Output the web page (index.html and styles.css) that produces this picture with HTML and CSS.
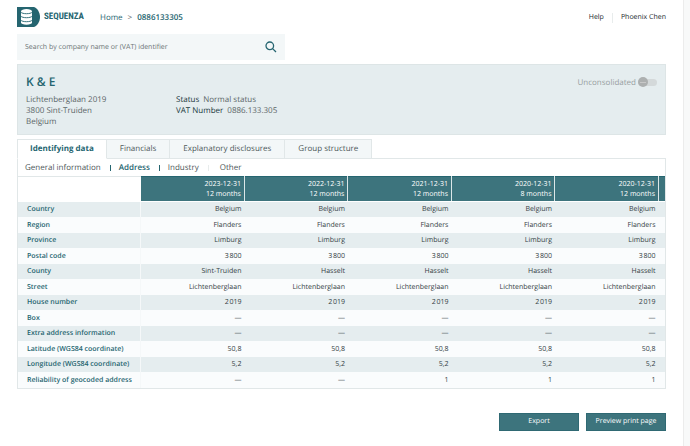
FILE: index.html
```html
<!DOCTYPE html>
<html lang="en">
<head>
<meta charset="utf-8">
<title>Sequenza</title>
<link rel="stylesheet" href="styles.css">
</head>
<body>
<div class="page">
  <header class="topbar">
    <a class="brand" href="#">
      <svg class="brand-mark" viewBox="0 0 23 20" aria-hidden="true">
        <path fill="#256570" d="M0 0h17c3 1 6 5 6 10s-3 9-6 10H0z"/>
        <path fill="#fff" d="M4 4.200v11.300c0 1.300 2.400 2.200 5.500 2.200s5.500-.9 5.500-2.200V4.200z"/>
        <ellipse cx="9.500" cy="4.300" rx="5.500" ry="2.200" fill="#fff"/>
        <path fill="none" stroke="#256570" stroke-width=".9" d="M4 5.200c1 2 10 2 11 0M4 9.200c1 2 10 2 11 0M4 13.200c1 2 10 2 11 0"/>
      </svg>
      <span class="brand-name">SEQUENZA</span>
    </a>
    <nav class="crumbs" aria-label="Breadcrumb">
      <a href="#">Home</a><span class="arrow">&gt;</span><a class="current" href="#">0886133305</a>
    </nav>
    <nav class="account" aria-label="Account">
      <a href="#">Help</a><a class="user" href="#">Phoenix Chen</a>
    </nav>
  </header>

  <form class="search">
    <input type="text" aria-label="Search" placeholder="Search by company name or (VAT) identifier">
    <button type="button" aria-label="Search">
      <svg viewBox="0 0 12 12" aria-hidden="true"><circle cx="4.800" cy="4.800" r="3.800"/><path d="M7.600 7.600l3.400 3.400"/></svg>
    </button>
  </form>

  <section class="company">
    <div class="address">
      <h1>K &amp; E</h1>
      <p>Lichtenberglaan 2019<br>3800 Sint-Truiden<br>Belgium</p>
    </div>
    <dl class="facts">
      <div><dt>Status</dt><dd>Normal status</dd></div>
      <div><dt>VAT Number</dt><dd>0886.133.305</dd></div>
    </dl>
    <label class="switch">Unconsolidated<input type="checkbox" disabled></label>
  </section>

  <nav class="tabs" aria-label="Sections">
    <a class="active" href="#">Identifying data</a><a href="#">Financials</a><a href="#">Explanatory disclosures</a><a href="#">Group structure</a>
  </nav>
  <main class="panel">
    <nav class="subnav" aria-label="Subsections">
      <a href="#">General information</a><a class="active" href="#">Address</a><a href="#">Industry</a><a class="last" href="#">Other</a>
    </nav>
    <table>
      <colgroup><col class="label-col"><col span="5" class="year-col"><col></colgroup>
      <thead>
        <tr><td></td><th>2023-12-31<br>12 months</th><th>2022-12-31<br>12 months</th><th>2021-12-31<br>12 months</th><th>2020-12-31<br>8 months</th><th>2020-12-31<br>12 months</th><th></th></tr>
      </thead>
      <tbody>
        <tr><th>Country</th><td>Belgium</td><td>Belgium</td><td>Belgium</td><td>Belgium</td><td>Belgium</td><td></td></tr>
        <tr><th>Region</th><td>Flanders</td><td>Flanders</td><td>Flanders</td><td>Flanders</td><td>Flanders</td><td></td></tr>
        <tr><th>Province</th><td>Limburg</td><td>Limburg</td><td>Limburg</td><td>Limburg</td><td>Limburg</td><td></td></tr>
        <tr><th>Postal code</th><td>3&#8202;800</td><td>3&#8202;800</td><td>3&#8202;800</td><td>3&#8202;800</td><td>3&#8202;800</td><td></td></tr>
        <tr><th>County</th><td>Sint-Truiden</td><td>Hasselt</td><td>Hasselt</td><td>Hasselt</td><td>Hasselt</td><td></td></tr>
        <tr><th>Street</th><td>Lichtenberglaan</td><td>Lichtenberglaan</td><td>Lichtenberglaan</td><td>Lichtenberglaan</td><td>Lichtenberglaan</td><td></td></tr>
        <tr><th>House number</th><td>2&#8202;019</td><td>2&#8202;019</td><td>2&#8202;019</td><td>2&#8202;019</td><td>2&#8202;019</td><td></td></tr>
        <tr><th>Box</th><td>—</td><td>—</td><td>—</td><td>—</td><td>—</td><td></td></tr>
        <tr><th>Extra address information</th><td>—</td><td>—</td><td>—</td><td>—</td><td>—</td><td></td></tr>
        <tr><th>Latitude (WGS84 coordinate)</th><td>50,8</td><td>50,8</td><td>50,8</td><td>50,8</td><td>50,8</td><td></td></tr>
        <tr><th>Longitude (WGS84 coordinate)</th><td>5,2</td><td>5,2</td><td>5,2</td><td>5,2</td><td>5,2</td><td></td></tr>
        <tr><th>Reliability of geocoded address</th><td>—</td><td>—</td><td>1</td><td>1</td><td>1</td><td></td></tr>
      </tbody>
    </table>
  </main>

  <div class="actions">
    <button type="button">Export</button>
    <button type="button">Preview print page</button>
  </div>
</div>
</body>
</html>
```

FILE: styles.css
```css
* { box-sizing: border-box; }

body {
  margin: 0;
  background: #f8f9f9;
  color: #4d5759;
  font: 7px/10px "Open Sans", "Noto Sans", sans-serif;
  text-rendering: geometricPrecision;
}

a { color: inherit; text-decoration: none; }

h1, p, dl, dd { margin: 0; }

button, input { font: inherit; text-rendering: inherit; }

.page {
  min-height: 100vh;
  margin-right: 6px;
  padding: 7px 17px 15px;
  border-right: 1px solid #ececec;
  background: #fff;
}

.topbar {
  display: flex;
  align-items: center;
  height: 20px;
}

.brand {
  display: flex;
  align-items: center;
  gap: 4px;
  color: #256570;
}

.brand-mark { width: 23px; height: 20px; }

.brand-name {
  font: bold 9px/20px "Liberation Sans Narrow", "Roboto Condensed", "Open Sans", sans-serif;
}

.crumbs {
  display: flex;
  gap: 5px;
  margin-left: 16px;
  color: #256570;
  font-size: 8px;
}

.crumbs .arrow { color: #5b6668; }

.crumbs .current { font-weight: 600; }

.crumbs, .account { padding-top: 2px; }

.account {
  display: flex;
  margin-left: auto;
  color: #20292b;
  font-weight: 500;
}

.account .user {
  margin-left: 8px;
  padding-left: 8px;
  border-left: 1px solid #e8ecec;
}

.search {
  display: flex;
  width: 268px;
  height: 26px;
  margin-top: 7px;
  padding: 0 8px;
  background: #f3f7f8;
}

.search input {
  flex: 1;
  padding: 2px 0 0;
  border: 0;
  background: none;
}

.search input::placeholder { color: #6b7577; opacity: 1; }

.search button {
  display: flex;
  align-items: center;
  padding: 0;
  border: 0;
  background: none;
}

.search svg {
  width: 12px;
  height: 12px;
  fill: none;
  stroke: #256570;
  stroke-width: 1.3;
}

.company {
  display: flex;
  min-height: 71px;
  margin-top: 4px;
  padding: 9px 8px 7px;
  border: 1px solid #dde5e6;
  background: #e5edef;
  color: #5b6668;
  font-size: 8px;
  line-height: 11px;
}

.company h1 {
  margin-bottom: 4px;
  color: #256570;
  font-size: 12px;
  font-weight: 600;
  line-height: 16px;
}

.address { width: 150px; }

.facts { padding-top: 20px; }

.facts div { display: flex; gap: 4px; }

.facts dt { color: #20383d; font-weight: 500; }

.switch {
  display: flex;
  align-items: center;
  gap: 2px;
  height: 16px;
  margin-left: auto;
  color: #979e9f;
}

.switch input {
  display: flex;
  align-items: center;
  width: 19px;
  height: 7px;
  margin: 0;
  appearance: none;
  border-radius: 4px;
  background: #d4d9da;
}

.switch input::before {
  content: "";
  width: 10px;
  height: 10px;
  flex: none;
  border-radius: 50%;
  background: linear-gradient(#c8c8c8, #c8c8c8) center / 6px 1px no-repeat #adb0b0;
}

.tabs {
  display: flex;
  margin-top: 4px;
  font-size: 8px;
  line-height: 18px;
}

.tabs a {
  padding: 0 13px;
  border: 1px solid #e1e7e8;
  border-width: 1px 1px 1px 0;
  background: #f3f7f8;
}

.tabs::after {
  content: "";
  flex: 1;
  border-bottom: 1px solid #e1e7e8;
}

.tabs .active {
  padding: 0 12px;
  border-left-width: 1px;
  border-bottom-color: #fff;
  background: #fff;
  color: #256570;
  font-weight: 700;
}

.panel { border: 1px solid #e1e7e8; border-top: 0; }

.subnav {
  display: flex;
  align-items: center;
  height: 17px;
  padding-left: 7px;
  font-size: 8px;
}

.subnav a + a {
  margin-left: 9px;
  padding-left: 8px;
  border-left: 1px solid #256570;
  line-height: 6px;
}

.subnav .last { padding-left: 11px; border-left-color: #e8ecec; }

.subnav .active { color: #256570; font-weight: 600; }

table {
  width: 100%;
  table-layout: fixed;
  border-collapse: collapse;
}

.label-col { width: 19%; }

.year-col { width: 16%; }

th, td { padding: 2px 3px 0 0; text-align: right; font-weight: 400; white-space: nowrap; }

thead td { border-top: 1px solid #e1e7e8; }

thead th {
  height: 25px;
  border-top: 1px solid #256570;
  border-right: 1px solid #dce7e8;
  border-bottom: 1px solid #fff;
  background: #3d747d;
  color: #fff;
}

thead th:last-child { border-right: 0; }

tbody tr { height: 15px; background: #fafcfd; color: #344144; }

tbody tr:nth-child(even) { height: 16px; }

tbody tr:nth-child(odd) { background: #e5edef; }

tbody th {
  padding-left: 9px;
  border-right: 1px solid #f5f8f9;
  color: #256570;
  font-weight: 600;
  text-align: left;
}

.actions {
  display: flex;
  justify-content: flex-end;
  gap: 7px;
  margin-top: 24px;
}

.actions button {
  width: 80px;
  height: 18px;
  padding: 1px 0 0;
  border: 1px solid #2f6973;
  background: #3d747d;
  color: #fff;
}
```
